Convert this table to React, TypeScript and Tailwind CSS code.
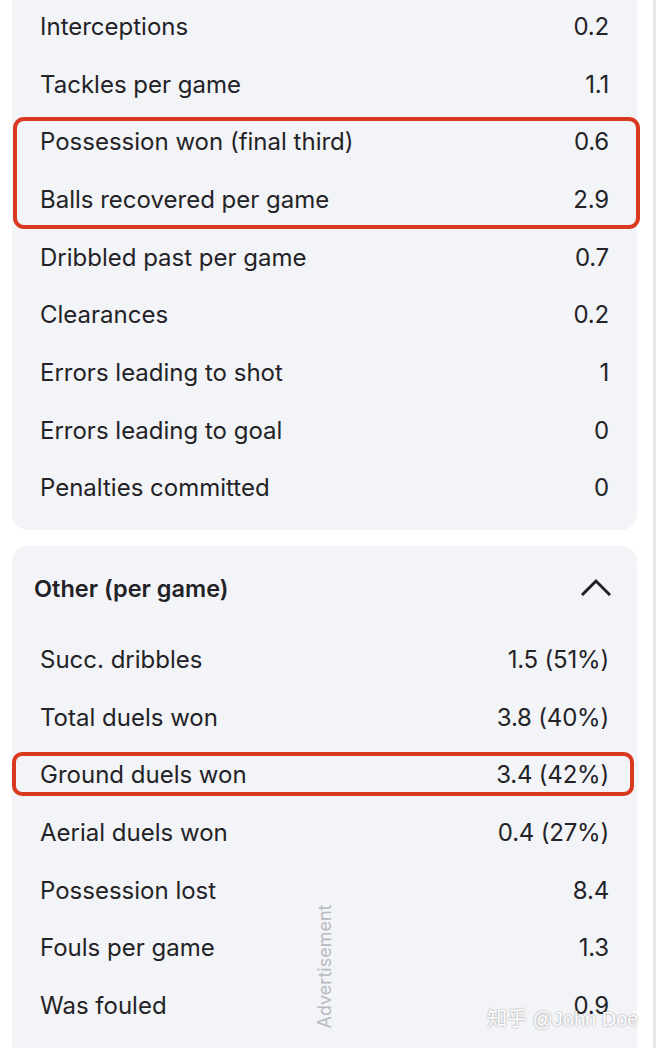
interface Stat {
  label: string
  value: string
}

const defending: Stat[] = [
  { label: 'Interceptions', value: '0.2' },
  { label: 'Tackles per game', value: '1.1' },
  { label: 'Possession won (final third)', value: '0.6' },
  { label: 'Balls recovered per game', value: '2.9' },
  { label: 'Dribbled past per game', value: '0.7' },
  { label: 'Clearances', value: '0.2' },
  { label: 'Errors leading to shot', value: '1' },
  { label: 'Errors leading to goal', value: '0' },
  { label: 'Penalties committed', value: '0' },
]

const other: Stat[] = [
  { label: 'Succ. dribbles', value: '1.5 (51%)' },
  { label: 'Total duels won', value: '3.8 (40%)' },
  { label: 'Ground duels won', value: '3.4 (42%)' },
  { label: 'Aerial duels won', value: '0.4 (27%)' },
  { label: 'Possession lost', value: '8.4' },
  { label: 'Fouls per game', value: '1.3' },
  { label: 'Was fouled', value: '0.9' },
]

function StatRow({ stat }: { stat: Stat }) {
  return (
    <div className="flex h-[57.7px] items-center justify-between px-[28px] text-[24px] text-[#232327]">
      <span>{stat.label}</span>
      <span className="tracking-[-0.2px]">{stat.value}</span>
    </div>
  )
}

export default function App() {
  return (
    <div
      className="flex h-[1048px] w-[656px] overflow-hidden bg-white"
      style={{ fontFamily: 'Inter, "Noto Sans", sans-serif' }}
    >
      <div className="relative flex-1 pl-3 pr-[16px]">
        {/* defending card */}
        <div className="-mt-[2px] rounded-b-2xl bg-[#f3f4f7] pb-[13px]">
          {defending.slice(0, 2).map((s) => (
            <StatRow key={s.label} stat={s} />
          ))}
          <div className="relative">
            {defending.slice(2, 4).map((s) => (
              <StatRow key={s.label} stat={s} />
            ))}
            <div className="pointer-events-none absolute top-[4px] -bottom-[0px] left-[1px] -right-[3px] rounded-[11px] border-[4px] border-[#d93a1f]" />
          </div>
          {defending.slice(4).map((s) => (
            <StatRow key={s.label} stat={s} />
          ))}
        </div>

        {/* other card */}
        <div className="mt-4 rounded-t-2xl bg-[#f3f4f7] pb-8">
          <div className="flex h-[85px] items-center justify-between pl-[22px] pr-[26px]">
            <span className="text-[23.5px] font-semibold text-[#222226]">Other (per game)</span>
            <svg width="30" height="18" viewBox="0 0 30 18" fill="none" className="mb-[4px]">
              <path d="M2 16 L15 3 L28 16" stroke="#222226" strokeWidth="3" strokeLinecap="square" />
            </svg>
          </div>
          {other.slice(0, 2).map((s) => (
            <StatRow key={s.label} stat={s} />
          ))}
          <div className="relative">
            <StatRow stat={other[2]} />
            <div className="pointer-events-none absolute top-[5px] bottom-[8px] left-0 right-[3px] rounded-[10px] border-[4px] border-[#d93a1f]" />
          </div>
          {other.slice(3).map((s) => (
            <StatRow key={s.label} stat={s} />
          ))}
        </div>

        <div className="pointer-events-none absolute left-[315px] top-[905px] flex h-[123px] w-[20px] items-center justify-center">
          <span className="-rotate-90 whitespace-nowrap text-[18px] text-[#b8bbc3]">Advertisement</span>
        </div>

        <div
          className="pointer-events-none absolute left-[487px] top-[1004px] whitespace-nowrap text-[20px] text-white [text-shadow:0_0_2px_rgba(0,0,0,0.45)]"
          style={{ fontFamily: '"Liberation Sans", "Noto Sans CJK SC", sans-serif' }}
        >
          知乎 @John Doe
        </div>
      </div>
      <div className="w-[3px] bg-[#e6e7ea]" />
    </div>
  )
}
